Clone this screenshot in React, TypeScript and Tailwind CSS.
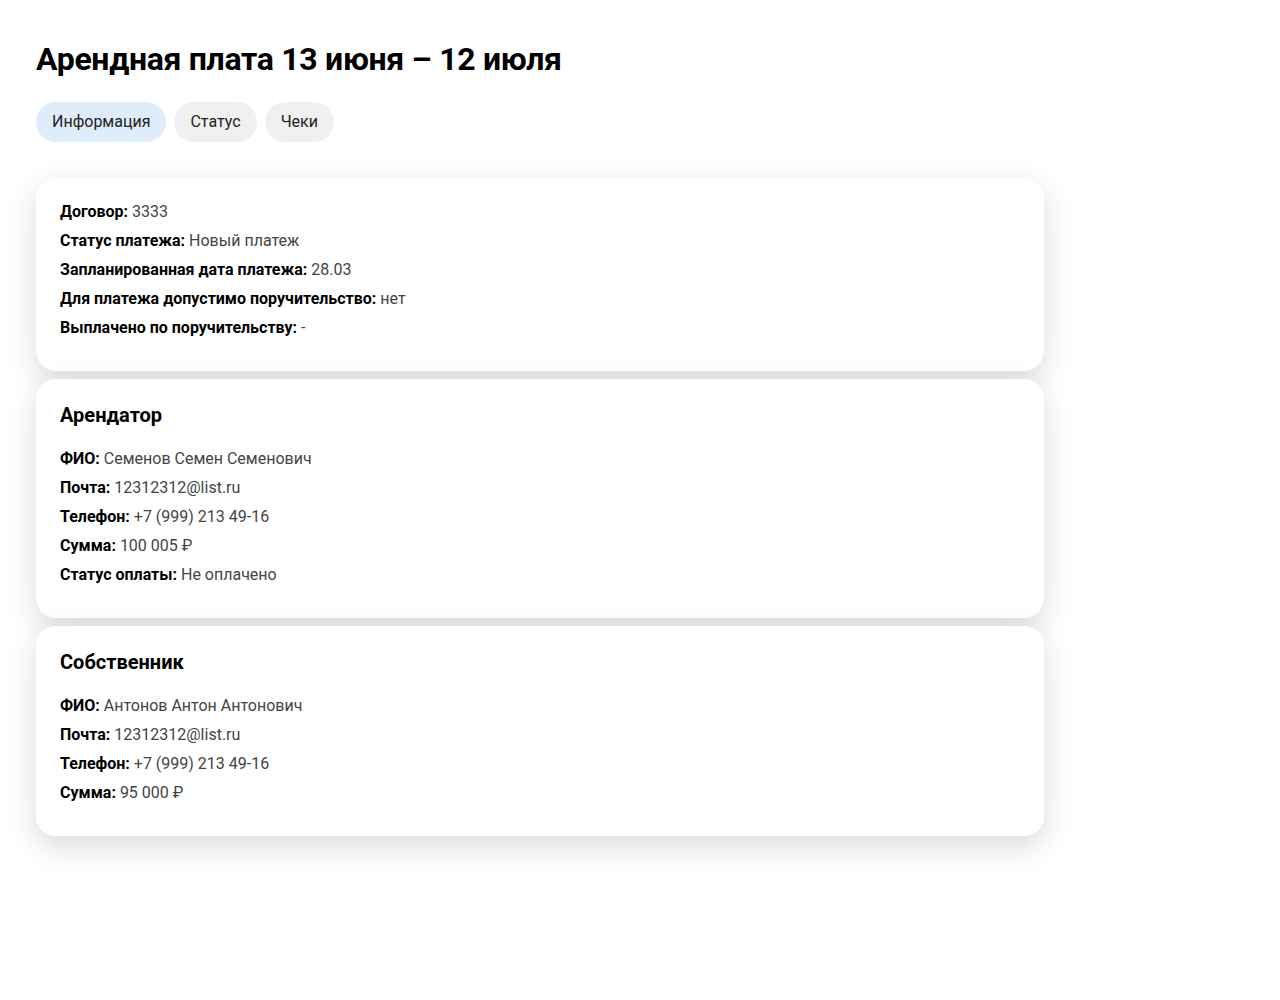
import React from "react";

const Row = ({ label, value }: { label: string; value: string }) => (
  <div className="text-[16px] leading-[24px]">
    <span className="font-bold text-black">{label}:</span>{" "}
    <span className="text-[#444]">{value}</span>
  </div>
);

const Card = ({ title, rows }: { title?: string; rows: [string, string][] }) => (
  <div className="bg-white rounded-[20px] px-6 pt-[22px] pb-[31px] shadow-[0_10px_30px_rgba(0,0,0,0.15)]">
    {title && <h2 className="text-[20px] leading-[28px] font-bold text-black mb-[18px]">{title}</h2>}
    <div className="flex flex-col gap-[5px]">
      {rows.map(([l, v]) => (
        <Row key={l} label={l} value={v} />
      ))}
    </div>
  </div>
);

export default function App() {
  return (
    <div className="min-h-[1000px] bg-white px-9 pt-[38px]" style={{ fontFamily: 'Roboto, "Noto Sans", sans-serif' }}>
      <div className="w-[1008px]">
        <h1 className="text-[32px] leading-[42px] font-bold text-black tracking-[-0.3px]">Арендная плата 13 июня – 12 июля</h1>
        <div className="flex gap-2 mt-[22px]">
          <button className="h-10 px-4 rounded-full bg-[#deecfb] text-[16px] text-[#222]">Информация</button>
          <button className="h-10 px-4 rounded-full bg-[#f0f0f0] text-[16px] text-[#222]">Статус</button>
          <button className="h-10 px-4 rounded-full bg-[#f0f0f0] text-[16px] text-[#222]">Чеки</button>
        </div>
        <div className="flex flex-col gap-2 mt-9">
          <Card
            rows={[
              ["Договор", "3333"],
              ["Статус платежа", "Новый платеж"],
              ["Запланированная дата платежа", "28.03"],
              ["Для платежа допустимо поручительство", "нет"],
              ["Выплачено по поручительству", "-"],
            ]}
          />
          <Card
            title="Арендатор"
            rows={[
              ["ФИО", "Семенов Семен Семенович"],
              ["Почта", "12312312@list.ru"],
              ["Телефон", "+7 (999) 213 49-16"],
              ["Сумма", "100 005 ₽"],
              ["Статус оплаты", "Не оплачено"],
            ]}
          />
          <Card
            title="Собственник"
            rows={[
              ["ФИО", "Антонов Антон Антонович"],
              ["Почта", "12312312@list.ru"],
              ["Телефон", "+7 (999) 213 49-16"],
              ["Сумма", "95 000 ₽"],
            ]}
          />
        </div>
      </div>
    </div>
  );
}
